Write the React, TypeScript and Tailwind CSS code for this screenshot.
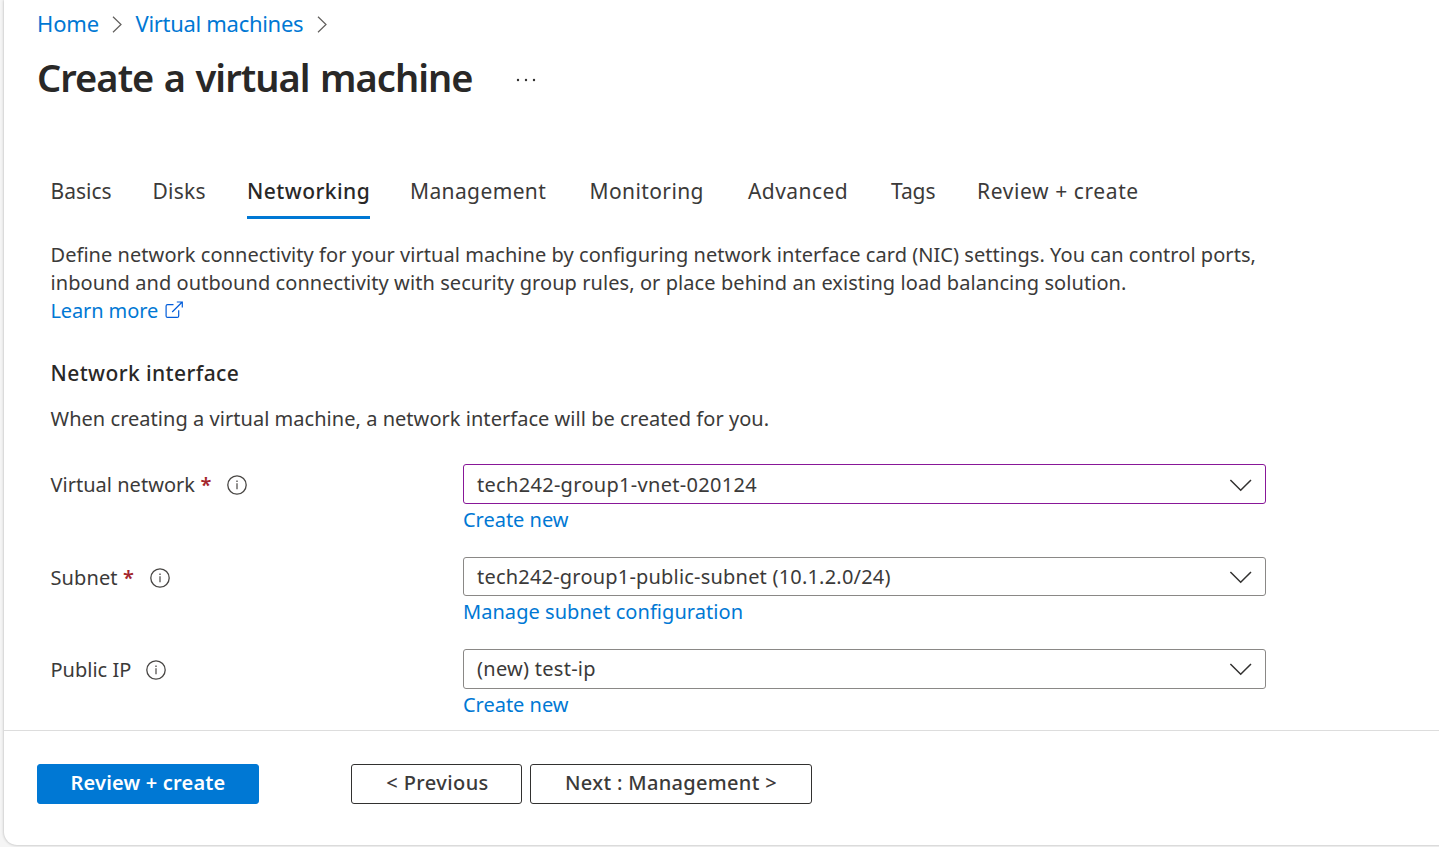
import type { ReactNode } from "react";

const tabs = [
  { label: "Basics", cls: "w-[102px]" },
  { label: "Disks", cls: "w-[94.5px] tracking-[0.25px]" },
  { label: "Networking", cls: "w-[163px]", active: true },
  { label: "Management", cls: "w-[179.5px] tracking-[0.38px]" },
  { label: "Monitoring", cls: "w-[158.5px] tracking-[0.4px]" },
  { label: "Advanced", cls: "w-[143px] tracking-[0.45px]" },
  { label: "Tags", cls: "w-[86px] tracking-[-0.1px]" },
  { label: "Review + create", cls: "w-[170px] tracking-[0.6px]" },
];

function BreadcrumbChevron() {
  return (
    <svg className="mt-[3px] -ml-px h-[17px] w-[11px] shrink-0" viewBox="0 0 11 17" fill="none" stroke="#605e5c" strokeWidth="1.2">
      <path d="M1 0.8 9 8.5 1 16.2" />
    </svg>
  );
}

function Info() {
  return (
    <svg className="h-5 w-5 shrink-0" viewBox="0 0 20 20" fill="none" stroke="#484644">
      <circle cx="10" cy="10" r="9.2" strokeWidth="1.3" />
      <path d="M10 8.2V14.2" strokeWidth="1.2" />
      <path d="M10 5.6V6.9" strokeWidth="1.3" />
    </svg>
  );
}

function ExternalLink() {
  return (
    <svg className="mt-[4px] ml-[7px] h-[18px] w-[19px] shrink-0" viewBox="0 0 19 18" fill="none" stroke="#015cda" strokeWidth="1.2">
      <path d="M8.5 3.6H2.6Q1.1 3.6 1.1 5.1V14.9Q1.1 16.4 2.6 16.4H12.2Q13.7 16.4 13.7 14.9V9.2" />
      <path d="M7.2 11 17.2 1M11.8 1H17.3V6.6" />
    </svg>
  );
}

function Field(props: {
  label: string;
  labelClass: string;
  required?: boolean;
  value: string;
  valueClass: string;
  boxClass: string;
  link: string;
  linkClass: string;
}) {
  return (
    <div className="flex w-[1217px]">
      <div className="flex w-[412.5px] items-start pt-[7px]">
        <span className={props.labelClass}>{props.label}</span>
        {props.required && <span className="ml-[5.5px] w-[11.5px] font-semibold text-[#a4262c]">*</span>}
        <span className="mt-[3.5px] ml-[15px]">
          <Info />
        </span>
      </div>
      <div className="w-[804px]">
        <div className={`flex w-[803px] items-start justify-between rounded-[3px] border pr-[13px] pl-[13px] ${props.boxClass}`}>
          <span className={props.valueClass}>{props.value}</span>
          <svg className="mt-[7.5px] h-[13px] w-[23px]" viewBox="0 0 23 13" fill="none" stroke="#323130" strokeWidth="1.5">
            <path d="M1.4 1 11.7 11.3 22 1" />
          </svg>
        </div>
        <a className={`mt-[2px] block text-[#0078d4] ${props.linkClass}`}>{props.link}</a>
      </div>
    </div>
  );
}

function Button({ className, children }: { className: string; children: ReactNode }) {
  return (
    <button className={`h-10 rounded-[3px] border pb-[2px] text-center text-[20px] leading-7 ${className}`}>{children}</button>
  );
}

export default function App() {
  return (
    <div className="h-[847px] w-[1439px] overflow-hidden bg-[#f5f5f5] pl-1 font-['Noto_Sans',sans-serif] text-[20px] leading-7 text-[#3b3a39]">
      <div className="flex h-[845px] w-[1460px] flex-col rounded-bl-[13px] bg-white shadow-[0_0_3px_rgba(0,0,0,0.3)]">
        <nav className="flex h-[38px] items-center pt-2 pl-[33px] text-[22px] leading-[30px] text-[#0078d4]">
          <a className="w-[76px] tracking-[-0.15px]">Home</a>
          <BreadcrumbChevron />
          <a className="ml-[12.5px] w-[182.5px] tracking-[-0.3px]">Virtual machines</a>
          <BreadcrumbChevron />
        </nav>

        <header className="mt-[13px] flex h-[52px] items-center pl-[33px]">
          <h1 className="w-[478.5px] text-[38px] leading-[52px] font-semibold tracking-[-0.95px] [word-spacing:1.5px] whitespace-nowrap text-[#292827]">
            Create a virtual machine
          </h1>
          <svg className="mt-[5px] h-1 w-5" viewBox="0 0 20 4" fill="#323130">
            <circle cx="2" cy="2" r="1.2" />
            <circle cx="10" cy="2" r="1.2" />
            <circle cx="18" cy="2" r="1.2" />
          </svg>
        </header>

        <main className="flex h-[627px] flex-col pl-[46.5px]">
          <div className="mt-[74px] flex h-[42px] text-[21px] leading-7">
            {tabs.map((t) => (
              <div key={t.label} className={`shrink-0 whitespace-nowrap ${t.cls}`}>
                {t.active ? (
                  <div className="h-[42px] w-[123px] border-b-[3px] border-[#0078d4] font-medium tracking-[0.45px] text-[#292827]">
                    {t.label}
                  </div>
                ) : (
                  t.label
                )}
              </div>
            ))}
          </div>

          <div className="mt-[22px] whitespace-nowrap">
            <p className="tracking-[0.05px]">
              Define network connectivity for your virtual machine by configuring network interface card (NIC) settings. You can control ports,
            </p>
            <p className="tracking-[0.073px]">
              inbound and outbound connectivity with security group rules, or place behind an existing load balancing solution.
            </p>
            <a className="flex text-[#0078d4] tracking-[-0.12px]">
              Learn more
              <ExternalLink />
            </a>
          </div>

          <h2 className="mt-[34px] text-[21px] leading-7 font-medium tracking-[0.4px] text-[#292827]">Network interface</h2>
          <p className="mt-[18px] tracking-[0.038px]">
            When creating a virtual machine, a network interface will be created for you.
          </p>

          <div className="mt-[31px] flex flex-col gap-[23px]">
            <Field
              label="Virtual network"
              labelClass="tracking-[0.02px]"
              required
              value="tech242-group1-vnet-020124"
              valueClass="tracking-[0.3px]"
              boxClass="h-10 border-[#881798] pt-[6px]"
              link="Create new"
              linkClass="tracking-[-0.02px]"
            />
            <Field
              label="Subnet"
              labelClass="tracking-[0.1px]"
              required
              value="tech242-group1-public-subnet (10.1.2.0/24)"
              valueClass="tracking-[0.2px]"
              boxClass="h-[39px] border-[#8a8886] pt-[5px]"
              link="Manage subnet configuration"
              linkClass="tracking-[0.05px]"
            />
            <Field
              label="Public IP"
              labelClass=""
              value="(new) test-ip"
              valueClass="tracking-[0.27px]"
              boxClass="h-10 border-[#8a8886] pt-[5px]"
              link="Create new"
              linkClass="tracking-[-0.02px]"
            />
          </div>
        </main>

        <footer className="flex h-[115px] border-t border-[#dddddd] pt-[33px] pl-[33px]">
          <Button className="w-[222px] border-[#0078d4] bg-[#0078d4] font-semibold tracking-[0.2px] text-white">Review + create</Button>
          <Button className="ml-[92px] w-[171px] border-[#323130] px-0 pl-[2px] font-medium tracking-[0.4px]">&lt; Previous</Button>
          <Button className="ml-2 w-[282px] border-[#323130] px-0 font-medium tracking-[0.32px]">Next : Management &gt;</Button>
        </footer>
      </div>
    </div>
  );
}
